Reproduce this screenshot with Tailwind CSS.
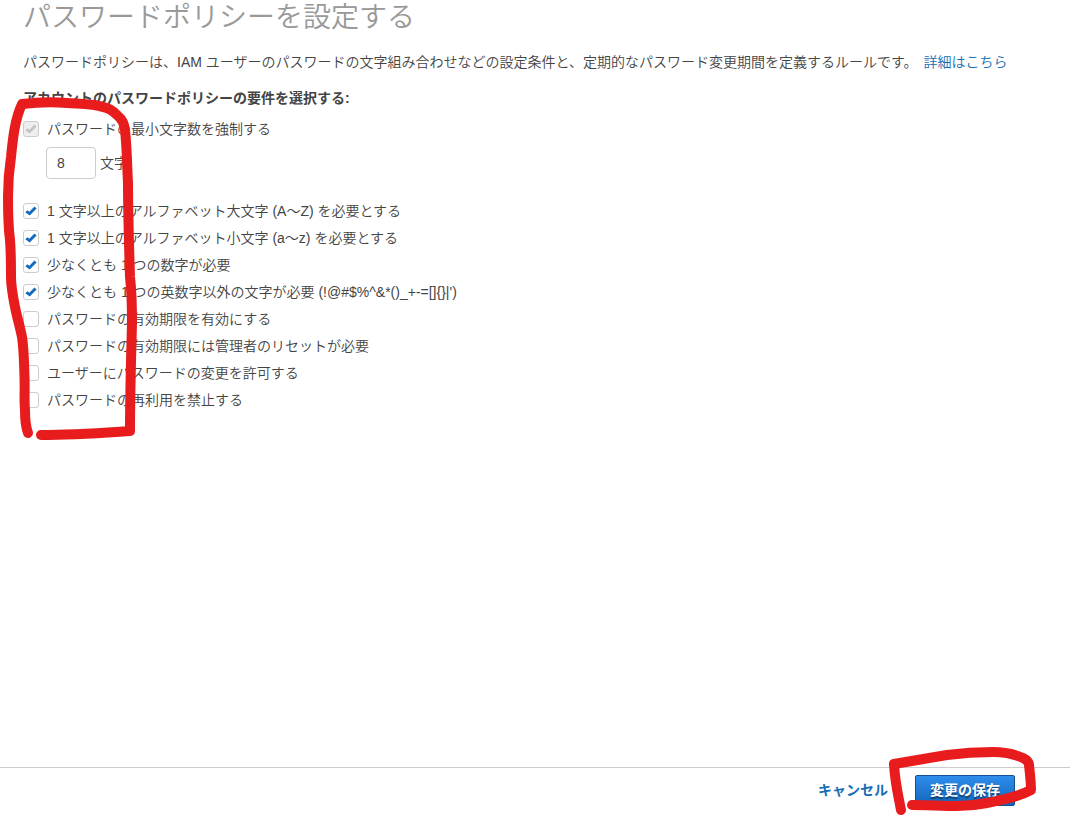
<!DOCTYPE html>
<html lang="ja">
<head>
<meta charset="utf-8">
<meta name="viewport" content="width=device-width, initial-scale=1">
<title>パスワードポリシーを設定する</title>
<script src="https://cdn.jsdelivr.net/npm/@tailwindcss/browser@4"></script>
</head>
<body class="bg-white font-['Liberation_Sans','Noto_Sans_CJK_JP',sans-serif] text-sm font-[350] text-[#444444]">
<div class="relative flex min-h-screen flex-col">
  <main class="px-[23px] pt-0.5">
    <h1 class="text-[28px] leading-8 font-[350] text-[#999999]">パスワードポリシーを設定する</h1>
    <p class="mt-[18px] leading-5">パスワードポリシーは、IAM ユーザーのパスワードの文字組み合わせなどの設定条件と、定期的なパスワード変更期間を定義するルールです。 <a href="#" class="ml-0.5 text-[#146eb4]">詳細はこちら</a></p>
    <form id="policy">
      <h2 class="mt-4 leading-5 font-bold">アカウントのパスワードポリシーの要件を選択する:</h2>
      <label class="mt-[7px] flex h-[27px] items-center gap-2"><span class="grid size-4 shrink-0"><input type="checkbox" checked disabled class="col-start-1 row-start-1 size-4 appearance-none rounded-[3px] border border-[#cccccc] bg-[#eeeeee]"><svg class="pointer-events-none col-start-1 row-start-1 size-4 fill-[#c4c4c4]" viewBox="0 0 16 16"><path d="M2.300 9.200 4.500 7.300 6.300 8.700 11.500 3.600 13.600 5.500 6.700 12.500Z"/></svg></span>パスワードの最小文字数を強制する</label>
      <div class="mt-[5px] flex items-center gap-1 pl-[23px]">
        <input id="length" type="text" value="8" class="h-8 w-[50px] rounded-sm border border-[#cccccc] px-2.5">
        <label for="length">文字</label>
      </div>
      <div class="mt-[18px]">
        <label class="flex h-[27px] items-center gap-2"><span class="grid size-4 shrink-0"><input type="checkbox" checked class="col-start-1 row-start-1 size-4 appearance-none rounded-[3px] border border-[#cccccc]"><svg class="pointer-events-none col-start-1 row-start-1 size-4 fill-[#146ac0]" viewBox="0 0 16 16"><path d="M2.300 9.200 4.500 7.300 6.300 8.700 11.500 3.600 13.600 5.500 6.700 12.500Z"/></svg></span>1 文字以上のアルファベット大文字 (A～Z) を必要とする</label>
        <label class="flex h-[27px] items-center gap-2"><span class="grid size-4 shrink-0"><input type="checkbox" checked class="col-start-1 row-start-1 size-4 appearance-none rounded-[3px] border border-[#cccccc]"><svg class="pointer-events-none col-start-1 row-start-1 size-4 fill-[#146ac0]" viewBox="0 0 16 16"><path d="M2.300 9.200 4.500 7.300 6.300 8.700 11.500 3.600 13.600 5.500 6.700 12.500Z"/></svg></span>1 文字以上のアルファベット小文字 (a～z) を必要とする</label>
        <label class="flex h-[27px] items-center gap-2"><span class="grid size-4 shrink-0"><input type="checkbox" checked class="col-start-1 row-start-1 size-4 appearance-none rounded-[3px] border border-[#cccccc]"><svg class="pointer-events-none col-start-1 row-start-1 size-4 fill-[#146ac0]" viewBox="0 0 16 16"><path d="M2.300 9.200 4.500 7.300 6.300 8.700 11.500 3.600 13.600 5.500 6.700 12.500Z"/></svg></span>少なくとも 1 つの数字が必要</label>
        <label class="flex h-[27px] items-center gap-2"><span class="grid size-4 shrink-0"><input type="checkbox" checked class="col-start-1 row-start-1 size-4 appearance-none rounded-[3px] border border-[#cccccc]"><svg class="pointer-events-none col-start-1 row-start-1 size-4 fill-[#146ac0]" viewBox="0 0 16 16"><path d="M2.300 9.200 4.500 7.300 6.300 8.700 11.500 3.600 13.600 5.500 6.700 12.500Z"/></svg></span>少なくとも 1 つの英数字以外の文字が必要 (!@#$%^&amp;*()_+-=[]{}|')</label>
        <label class="flex h-[27px] items-center gap-2"><input type="checkbox" class="size-4 shrink-0 appearance-none rounded-[3px] border border-[#cccccc]">パスワードの有効期限を有効にする</label>
        <label class="flex h-[27px] items-center gap-2"><input type="checkbox" class="size-4 shrink-0 appearance-none rounded-[3px] border border-[#cccccc]">パスワードの有効期限には管理者のリセットが必要</label>
        <label class="flex h-[27px] items-center gap-2"><input type="checkbox" class="size-4 shrink-0 appearance-none rounded-[3px] border border-[#cccccc]">ユーザーにパスワードの変更を許可する</label>
        <label class="flex h-[27px] items-center gap-2"><input type="checkbox" class="size-4 shrink-0 appearance-none rounded-[3px] border border-[#cccccc]">パスワードの再利用を禁止する</label>
      </div>
    </form>
  </main>
  <footer class="mt-auto flex items-center justify-end gap-[27px] border-t border-[#cccccc] pt-[7px] pr-[55px] pb-[9px] font-bold">
    <button type="button" class="pb-0.5 text-[#146eb4]">キャンセル</button>
    <button type="submit" form="policy" class="h-[31px] w-[100px] rounded-[2px] border border-[#12508f] bg-linear-to-b from-[#2f8dec] to-[#1166bb] pb-0.5 text-white text-shadow-[0_2px_1px_rgb(0_0_0_/_0.45)]">変更の保存</button>
  </footer>
  <!-- Hand-drawn marks round the check boxes and the save button -->
  <svg class="pointer-events-none absolute top-0 left-0 h-[450px] w-[150px] fill-none stroke-[#e81c1c] stroke-10" viewBox="0 0 150 450" stroke-linecap="round" stroke-linejoin="round" aria-hidden="true">
    <path d="M28 433C25 425 25 417 25 410C24 399 25 388 24.500 377C24 363 24 350 22 337C20 327 17 317 15 307C13 297 11 287 11 277C11 264 11 252 10 240C8 225 8 211 8 197C8 183 9 170 11 157C13 137 15 119 22 104C40 102 54 102 67 103C80 104 94 104 103 107C109 108 113 111 117 115C123 120 124 124 125 130C127 148 127 165 128 183C128 214 129 245 130 277C132 294 132 308 132 323C131 359 130 395 130 431C100 433 75 435 41 435"/>
  </svg>
  <svg class="pointer-events-none absolute right-[30px] bottom-0 h-[75px] w-[160px] fill-none stroke-[#e81c1c] stroke-10" viewBox="880 740 160 75" stroke-linecap="round" stroke-linejoin="round" aria-hidden="true">
    <path d="M901 810C898 794 895 783 894 764C912 761 929 758 947 755C962 753 977 752 993 752C1004 752 1014 754 1023 758C1027 760 1029 762 1029 765C1030 774 1031 782 1031 790C1018 797 1002 800 987 803C977 805 967 806 957 806C942 806 927 805 912 805"/>
  </svg>
</div>
</body>
</html>
